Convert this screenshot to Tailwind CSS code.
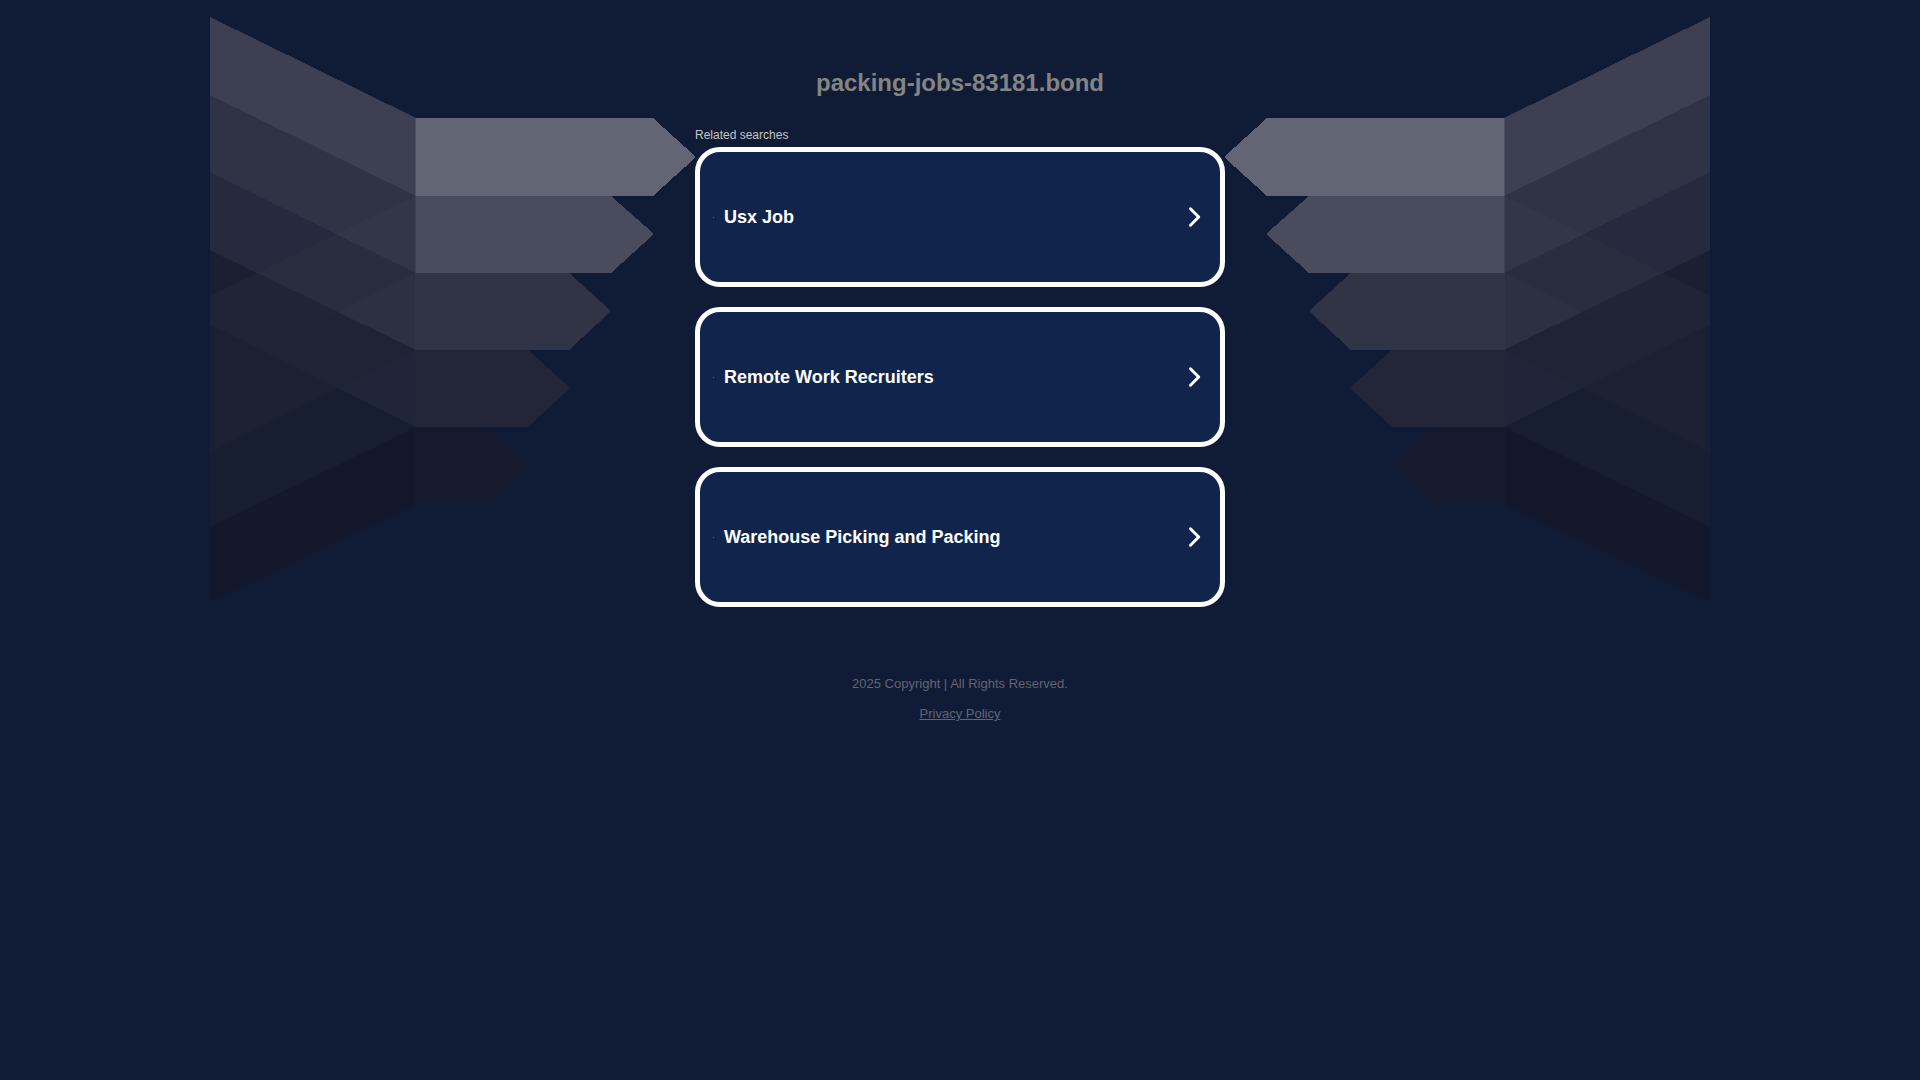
<!DOCTYPE html>
<html lang="en">
<head>
  <meta charset="UTF-8" />
  <meta name="viewport" content="width=device-width, initial-scale=1" />
  <title>packing-jobs-83181.bond</title>
  <script src="https://cdn.jsdelivr.net/npm/@tailwindcss/browser@4"></script>
</head>
<body class="relative min-h-screen overflow-x-hidden bg-[#101c35] font-['Liberation_Sans',Arial,sans-serif]">
  <!-- Background arrows, right side mirrors the left -->
  <svg class="absolute top-0 left-1/2 -translate-x-1/2 w-[1500px] h-[620px] max-w-none" viewBox="0 0 1500 620" shape-rendering="crispEdges" aria-hidden="true">
    <g id="arrows">
      <polygon points="0,324 206,427 206,505 0,603" fill="#13182d" />
      <polygon points="0,324 206,427 0,527" fill="#181e32" />
      <polygon points="0,324 128,388 0,452" fill="#1b2133" />

      <polygon points="0,250 206,350 206,427 0,324" fill="#1f2437" />
      <polygon points="0,250 48,273 0,296" fill="#1a1f32" />
      <polygon points="128,312 206,350 128,388 50,349" fill="#1e2336" />
      <polygon points="128,388 206,350 206,427" fill="#202539" />

      <polygon points="0,172 206,273 206,350 0,250" fill="#282d3f" />
      <polygon points="0,172 126,234 48,273 0,250" fill="#252a3e" />
      <polygon points="206,273 206,350 128,312" fill="#2c3042" />

      <polygon points="0,95 206,196 206,273 0,172" fill="#2e3346" />
      <polygon points="206,196 206,273 126,234" fill="#323649" />

      <polygon points="0,17 206,118 206,196 0,95" fill="#3c4052" />

      <polygon points="205,118 443,118 486,157 443,196 205,196" fill="#626573" />
      <polygon points="205,196 401,196 444,234 401,273 205,273" fill="#494c5c" />
      <polygon points="205,273 359,273 401,311 359,350 205,350" fill="#303447" />
      <polygon points="205,350 318,350 360,388 318,427 205,427" fill="#222638" />
      <polygon points="205,427 278,427 318,465 278,505 205,505" fill="#161a2e" />
      <rect x="205" y="118" width="1" height="78" fill="#4e5162" />
      <rect x="205" y="196" width="1" height="77" fill="#3d4152" />
    </g>
    <use href="#arrows" transform="translate(1500 0) scale(-1 1)" />
  </svg>

  <div class="relative mx-auto w-full max-w-[530px]">
    <header class="pt-[65px] text-center">
      <h1 class="text-2xl leading-9 font-bold text-[#848484]">packing-jobs-83181.bond</h1>
    </header>

    <main class="pt-[27px]">
      <p class="mb-1 text-xs leading-[15px] text-[#c4c4c4]">Related searches</p>
      <ul class="flex flex-col gap-5">
        <li>
          <a href="#" class="flex h-[140px] items-center rounded-[25px] border-5 border-white bg-[#11254c] pr-[18px] pl-[13px] text-lg font-bold text-white">
            <span class="mr-2.5 size-px bg-white/25"></span>
            <span class="flex-1">Usx Job</span>
            <svg class="h-6 w-4" viewBox="0 0 16 24" fill="none" stroke="currentColor" stroke-width="3" stroke-linecap="round" stroke-linejoin="round" aria-hidden="true"><path d="M4.5 3.8 12.7 12 4.5 20.2" /></svg>
          </a>
        </li>
        <li>
          <a href="#" class="flex h-[140px] items-center rounded-[25px] border-5 border-white bg-[#11254c] pr-[18px] pl-[13px] text-lg font-bold text-white">
            <span class="mr-2.5 size-px bg-white/25"></span>
            <span class="flex-1">Remote Work Recruiters</span>
            <svg class="h-6 w-4" viewBox="0 0 16 24" fill="none" stroke="currentColor" stroke-width="3" stroke-linecap="round" stroke-linejoin="round" aria-hidden="true"><path d="M4.5 3.8 12.7 12 4.5 20.2" /></svg>
          </a>
        </li>
        <li>
          <a href="#" class="flex h-[140px] items-center rounded-[25px] border-5 border-white bg-[#11254c] pr-[18px] pl-[13px] text-lg font-bold text-white">
            <span class="mr-2.5 size-px bg-white/25"></span>
            <span class="flex-1">Warehouse Picking and Packing</span>
            <svg class="h-6 w-4" viewBox="0 0 16 24" fill="none" stroke="currentColor" stroke-width="3" stroke-linecap="round" stroke-linejoin="round" aria-hidden="true"><path d="M4.5 3.8 12.7 12 4.5 20.2" /></svg>
          </a>
        </li>
      </ul>
    </main>

    <footer class="flex flex-col items-center gap-[15px] pt-[69px] pb-10 text-[13px] leading-[15px] text-[#626574]">
      <p>2025 Copyright | All Rights Reserved.</p>
      <a href="#" class="underline">Privacy Policy</a>
    </footer>
  </div>
</body>
</html>
